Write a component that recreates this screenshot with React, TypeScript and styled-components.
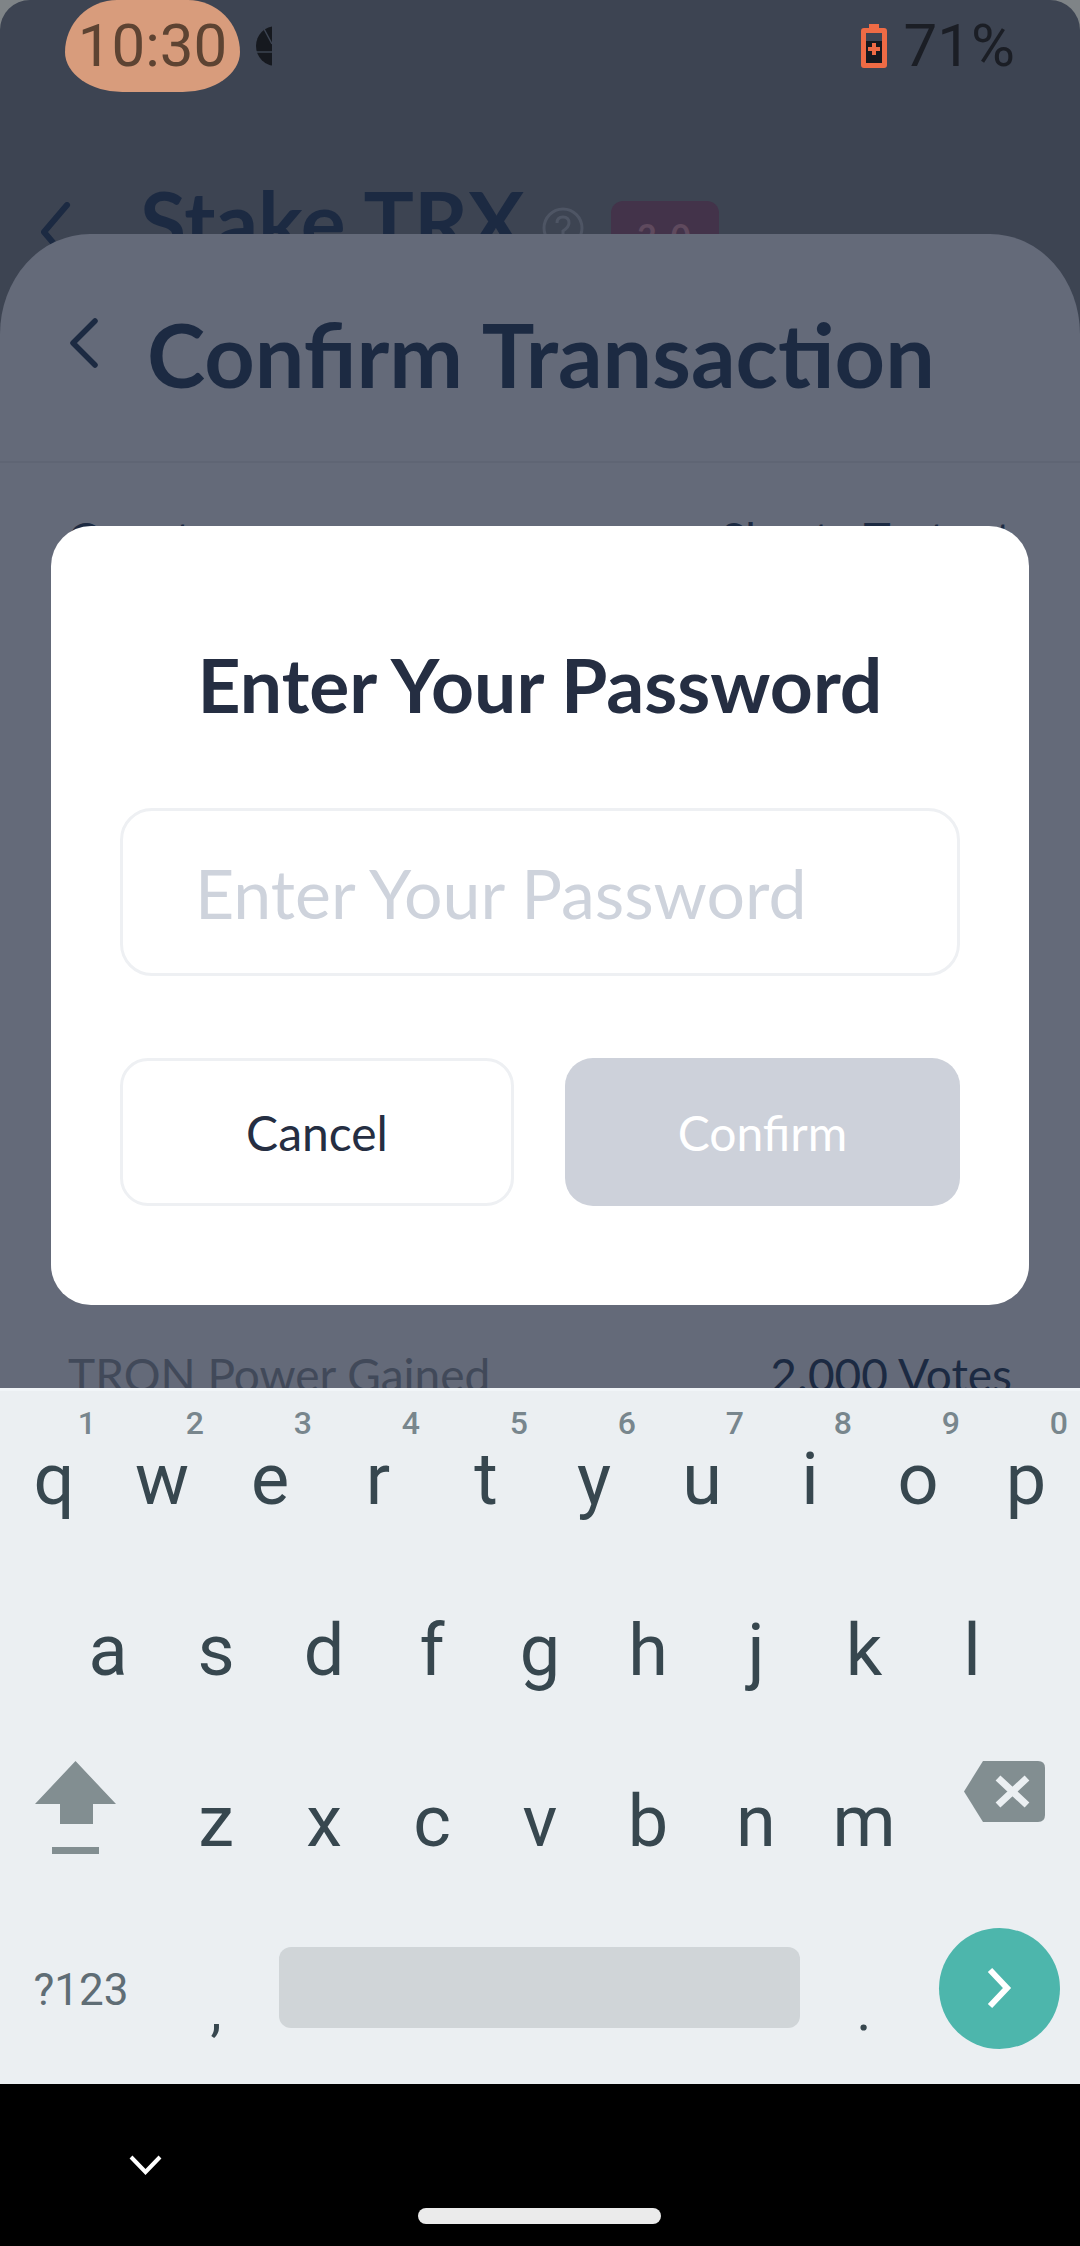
import { FC } from 'react'
import styled, { createGlobalStyle } from 'styled-components'

const GlobalStyle = createGlobalStyle`
  html, body {
    margin: 0;
    padding: 0;
    background: #7f8487;
  }
  * {
    box-sizing: border-box;
  }
`

const Screen = styled.div`
  width: 1080px;
  height: 2246px;
  display: flex;
  flex-direction: column;
  overflow: hidden;
  font-family: 'Lato', 'Liberation Sans', sans-serif;
`

const AppArea = styled.div`
  position: relative;
  height: 1388px;
  overflow: hidden;
  background: #3d4452;
  border-radius: 30px 30px 0 0;
`

const StatusBar = styled.div`
  height: 92px;
  padding: 0 65px;
  display: flex;
  align-items: flex-start;
  font-family: 'Roboto', sans-serif;
  font-size: 60px;
  line-height: 92px;
`

const TimePill = styled.div`
  width: 175px;
  height: 92px;
  border-radius: 0 0 66px 66px / 0 0 46px 46px;
  background: #d89c7c;
  color: #5d4332;
  text-align: center;
  border-top-left-radius: 60px;
  border-top-right-radius: 60px;
`

const StatusRight = styled.div`
  margin-left: auto;
  display: flex;
  align-items: center;
  gap: 17px;
  color: #1b1e25;
`

const PageHeader = styled.div`
  margin-top: 79px;
  padding-left: 40px;
  display: flex;
  align-items: flex-start;
`

const PageTitle = styled.div`
  margin: 0 18px 0 68px;
  font-size: 84px;
  font-weight: 700;
  line-height: 100px;
  color: #1c2a42;
`

const Badge = styled.div`
  margin: 30px 0 0 27px;
  width: 108px;
  height: 70px;
  border-radius: 12px;
  background: #43334a;
  color: #5f4a5e;
  font-size: 34px;
  font-weight: 700;
  line-height: 70px;
  text-align: center;
  letter-spacing: 3px;
`

const Sheet = styled.div`
  position: absolute;
  top: 234px;
  left: 0;
  right: 0;
  height: 1300px;
  border-radius: 90px 90px 0 0 / 100px 100px 0 0;
  background: #646a79;
`

const SheetHeader = styled.div`
  height: 229px;
  padding: 84px 0 0 69px;
  display: flex;
  align-items: flex-start;
  gap: 48px;
  border-bottom: 2px solid #5f6574;
`

const SheetTitle = styled.div`
  font-size: 88px;
  font-weight: 700;
  line-height: 56px;
  color: #1c2a42;
  padding-top: 8px;
`

const InfoList = styled.div`
  padding: 48px 68px 0;
  display: flex;
  flex-direction: column;
  gap: 780px;
`

const InfoRow = styled.div`
  display: flex;
  justify-content: space-between;
  font-size: 46px;
  line-height: 56px;
  color: #1c2a42;
`

const InfoLabel = styled.span<{ $muted?: boolean }>`
  color: ${(p) => (p.$muted ? '#414959' : '#1c2a42')};
`

const Modal = styled.div`
  position: absolute;
  top: 526px;
  left: 51px;
  width: 978px;
  height: 779px;
  padding: 118px 69px 0;
  display: flex;
  flex-direction: column;
  border-radius: 40px;
  background: #fff;
`

const ModalTitle = styled.div`
  font-size: 75px;
  font-weight: 700;
  line-height: 80px;
  text-align: center;
  color: #252e42;
`

const PasswordInput = styled.input`
  margin-top: 84px;
  width: 100%;
  height: 168px;
  padding: 0 72px;
  border: 3px solid #eef0f3;
  border-radius: 32px;
  outline: none;
  font-family: inherit;
  font-size: 68px;
  color: #252e42;
  background: #fff;

  &::placeholder {
    color: #ced3dc;
    opacity: 1;
  }
`

const ButtonRow = styled.div`
  margin-top: 82px;
  display: grid;
  grid-template-columns: 394px 395px;
  column-gap: 51px;
`

const ModalButton = styled.button<{ $primary?: boolean }>`
  height: 148px;
  border: ${(p) => (p.$primary ? 'none' : '3px solid #eef0f3')};
  border-radius: 28px;
  background: ${(p) => (p.$primary ? '#cdd1da' : '#fff')};
  color: ${(p) => (p.$primary ? '#fff' : '#252e42')};
  font-family: inherit;
  font-size: 48px;
  padding: 0;
`

const Keyboard = styled.div`
  height: 696px;
  background: #ebeff2;
  border-top: 3px solid #f1f5f8;
  font-family: 'Roboto', sans-serif;
  color: #37474f;
`

const KeyRow = styled.div<{ $inset?: number }>`
  height: 171px;
  padding-left: ${(p) => p.$inset ?? 0}px;
  display: flex;
`

const Key = styled.div<{ $wide?: boolean }>`
  position: relative;
  flex: 0 0 ${(p) => (p.$wide ? 162 : 108)}px;
  padding-top: 47px;
  display: flex;
  justify-content: center;
  align-items: flex-start;
  font-size: 72px;
  line-height: 84px;
`

const Hint = styled.span`
  position: absolute;
  top: 12px;
  right: 12px;
  font-size: 32px;
  font-weight: 500;
  line-height: 40px;
  color: #78868d;
`

const SymbolKey = styled.div`
  flex: 0 0 162px;
  padding-right: 0;
  display: flex;
  align-items: center;
  justify-content: center;
  font-size: 44px;
  color: #5f6d75;
`

const PunctuationKey = styled.div`
  flex: 0 0 108px;
  padding-top: 74px;
  display: flex;
  justify-content: center;
  font-size: 56px;
  line-height: 66px;
`

const SpaceKey = styled.div`
  flex: 0 0 540px;
  padding: 43px 10px 0 9px;

  &::after {
    content: '';
    display: block;
    height: 81px;
    border-radius: 12px;
    background: #d0d5d8;
  }
`

const EnterKey = styled.div`
  flex: 0 0 162px;
  display: flex;
  align-items: center;
  justify-content: center;
`

const EnterCircle = styled.div`
  width: 121px;
  height: 121px;
  margin-top: -3px;
  border-radius: 50%;
  background: #4db6ac;
  display: flex;
  align-items: center;
  justify-content: center;
`

const IconKey = styled.div`
  flex: 0 0 162px;
  padding-top: 28px;
  display: flex;
  justify-content: center;
`

const NavBar = styled.div`
  position: relative;
  flex: 1;
  background: #000;
`

const NavChevron = styled.svg`
  position: absolute;
  left: 129px;
  top: 71px;
`

const HomeBar = styled.div`
  position: absolute;
  left: 418px;
  top: 124px;
  width: 243px;
  height: 16px;
  border-radius: 8px;
  background: #ebebeb;
`

const Chevron: FC<{ size: number; color: string }> = ({ size, color }) => (
  <svg width={size * 0.6} height={size} viewBox="0 0 30 50" fill="none" style={{ flexShrink: 0 }}>
    <path d="M26 3 L4 25 L26 47" stroke={color} strokeWidth="5.5" strokeLinecap="round" strokeLinejoin="round" />
  </svg>
)

const rows = [
  ['q', 'w', 'e', 'r', 't', 'y', 'u', 'i', 'o', 'p'],
  ['a', 's', 'd', 'f', 'g', 'h', 'j', 'k', 'l'],
  ['z', 'x', 'c', 'v', 'b', 'n', 'm'],
]
const hints = ['1', '2', '3', '4', '5', '6', '7', '8', '9', '0']

const App: FC = () => (
  <Screen>
    <GlobalStyle />
    <AppArea>
      <StatusBar>
        <TimePill>10:30</TimePill>
        <svg width="16" height="42" viewBox="0 0 16 42" style={{ margin: '25px 0 0 16px' }}>
          <circle cx="20" cy="21" r="20" fill="#16191f" />
          <path d="M0 27 H16 M7 2 L16 19" stroke="#3d4452" strokeWidth="1.5" fill="none" />
        </svg>
        <StatusRight>
          <svg width="26" height="44" viewBox="0 0 26 44">
            <path d="M8 0 H18 V4 H23 Q26 4 26 7 V41 Q26 44 23 44 H3 Q0 44 0 41 V7 Q0 4 3 4 H8 Z" fill="#ef6b45" />
            <rect x="5" y="9" width="16" height="30" fill="#3d4452" />
            <rect x="5" y="17" width="16" height="22" fill="#16191f" />
            <path d="M13 19 V31 M7 25 H19" stroke="#ef6b45" strokeWidth="4" />
          </svg>
          71%
        </StatusRight>
      </StatusBar>
      <PageHeader>
        <svg width="32" height="50" viewBox="0 0 32 50" fill="none" style={{ marginTop: 31 }}>
          <path d="M27 3 L4 30 L27 57" stroke="#1c2a42" strokeWidth="6" strokeLinecap="round" strokeLinejoin="round" />
        </svg>
        <PageTitle>Stake TRX</PageTitle>
        <svg width="42" height="42" viewBox="0 0 42 42" fill="none" style={{ marginTop: 36 }}>
          <circle cx="21" cy="21" r="19" stroke="#4e5564" strokeWidth="3" />
          <path d="M15 16 Q15 10 21 10 Q27 10 27 16 Q27 20 21 24 V29" stroke="#4e5564" strokeWidth="3" />
        </svg>
        <Badge>2.0</Badge>
      </PageHeader>
      <Sheet>
        <SheetHeader>
          <Chevron size={50} color="#1c2a42" />
          <SheetTitle>Confirm Transaction</SheetTitle>
        </SheetHeader>
        <InfoList>
          <InfoRow>
            <InfoLabel>Count</InfoLabel>
            <span>Shasta Testnet</span>
          </InfoRow>
          <InfoRow>
            <InfoLabel $muted>TRON Power Gained</InfoLabel>
            <span>2.000 Votes</span>
          </InfoRow>
        </InfoList>
      </Sheet>
      <Modal>
        <ModalTitle>Enter Your Password</ModalTitle>
        <PasswordInput type="password" placeholder="Enter Your Password" />
        <ButtonRow>
          <ModalButton>Cancel</ModalButton>
          <ModalButton $primary>Confirm</ModalButton>
        </ButtonRow>
      </Modal>
    </AppArea>
    <Keyboard>
      <KeyRow>
        {rows[0].map((k, i) => (
          <Key key={k}>
            <Hint>{hints[i]}</Hint>
            {k}
          </Key>
        ))}
      </KeyRow>
      <KeyRow $inset={54}>
        {rows[1].map((k) => (
          <Key key={k}>{k}</Key>
        ))}
      </KeyRow>
      <KeyRow>
        <IconKey>
          <svg width="81" height="93" viewBox="0 0 81 93" style={{ marginLeft: -12 }}>
            <path d="M40.5 0 L81 43 H58 V63 H25 V43 H0 Z" fill="#828e91" />
            <rect x="17" y="86" width="47" height="7" fill="#828e91" />
          </svg>
        </IconKey>
        {rows[2].map((k) => (
          <Key key={k}>{k}</Key>
        ))}
        <IconKey>
          <svg width="81" height="61" viewBox="0 0 81 61" style={{ marginLeft: 10 }}>
            <path d="M19 0 H74 Q81 0 81 7 V54 Q81 61 74 61 H19 L0 30.5 Z" fill="#828e91" />
            <path d="M34 17 L63 44 M63 17 L34 44" stroke="#ebeff2" strokeWidth="7" />
          </svg>
        </IconKey>
      </KeyRow>
      <KeyRow>
        <SymbolKey>?123</SymbolKey>
        <PunctuationKey>,</PunctuationKey>
        <SpaceKey />
        <PunctuationKey>.</PunctuationKey>
        <EnterKey>
          <EnterCircle>
            <svg width="26" height="42" viewBox="0 0 26 42" fill="none">
              <path d="M4 3 L21 21 L4 39" stroke="#fff" strokeWidth="6" />
            </svg>
          </EnterCircle>
        </EnterKey>
      </KeyRow>
    </Keyboard>
    <NavBar>
      <NavChevron width="33" height="20" viewBox="0 0 33 20" fill="none">
        <path d="M2 2 L16.5 17 L31 2" stroke="#fff" strokeWidth="4" />
      </NavChevron>
      <HomeBar />
    </NavBar>
  </Screen>
)

export default App
